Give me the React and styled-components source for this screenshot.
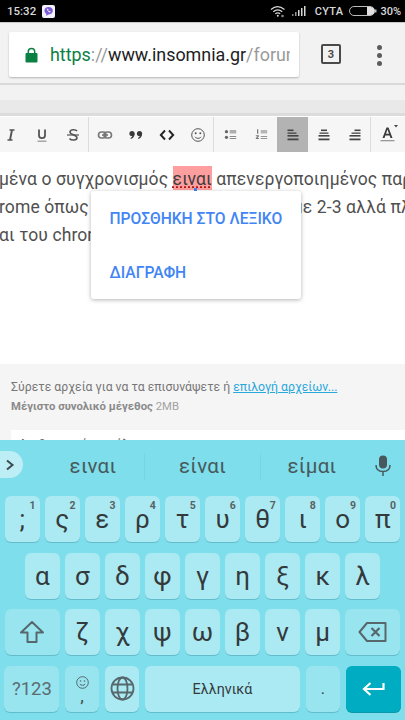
import React from "react";
import styled, { createGlobalStyle } from "styled-components";

const GlobalStyle = createGlobalStyle`
  html, body {
    margin: 0;
    padding: 0;
    background: #fff;
    font-family: Roboto, "Noto Sans", sans-serif;
  }
`;

const Page = styled.div`
  width: 405px;
  height: 720px;
  display: flex;
  flex-direction: column;
  overflow: hidden;
`;

const StatusBar = styled.div`
  height: 22px;
  flex: none;
  background: #000;
  border-bottom: 1px solid #c9c9c9;
  color: #d8d8d8;
  display: flex;
  align-items: center;
  padding: 0 4px 0 7px;
  font-size: 11px;
  font-weight: 500;
`;

const Time = styled.span`
  margin-right: 6px;
  font-size: 11.5px;
`;

const Carrier = styled.span`
  margin: 0 6px 0 9px;
  letter-spacing: 0.3px;
`;

const Spacer = styled.div`
  flex: 1;
`;

const Gap = styled.span`
  width: ${(p) => p.$w}px;
`;

const ChromeBar = styled.div`
  height: 62px;
  flex: none;
  box-sizing: border-box;
  background: #f2f2f2;
  border-bottom: 2px solid #d9d9d9;
  display: flex;
  align-items: flex-start;
  padding: 9px 0 0 9px;
`;

const UrlBox = styled.div`
  width: 290px;
  height: 45px;
  flex: none;
  box-sizing: border-box;
  background: #fff;
  border-radius: 2px;
  box-shadow: 0 1px 2px rgba(0, 0, 0, 0.25);
  display: flex;
  align-items: center;
  padding: 0 9px 0 16px;
`;

const UrlText = styled.div`
  margin-left: 12px;
  font-size: 17.9px;
  white-space: nowrap;
  overflow: hidden;
  color: #212121;
`;

const UrlPart = styled.span`
  color: ${(p) => p.$color};
`;

const TabCount = styled.div`
  width: 20px;
  height: 20px;
  flex: none;
  box-sizing: border-box;
  margin: 12px 0 0 22px;
  border: 2px solid #4a4a4a;
  border-radius: 2px;
  display: flex;
  align-items: center;
  justify-content: center;
  font-size: 11px;
  font-weight: 700;
  color: #4a4a4a;
`;

const MenuDots = styled.div`
  display: flex;
  flex-direction: column;
  gap: 3px;
  margin: 13px 0 0 36px;
`;

const Dot = styled.span`
  width: 5px;
  height: 5px;
  border-radius: 50%;
  background: #5c5c5c;
`;

const BandLight = styled.div`
  height: 15px;
  flex: none;
  background: #f2f2f2;
`;

const BandDark = styled.div`
  height: 13px;
  flex: none;
  background: #e9e9e9;
  border-bottom: 3px solid #dcdcdc;
  margin-bottom: 1px;
`;

const Toolbar = styled.div`
  height: 35px;
  flex: none;
  background: #f6f6f6;
  display: flex;
  margin-left: -5px;
  width: 410px;
`;

const ToolGroup = styled.div`
  display: flex;
  flex: none;
  border-right: ${(p) => (p.$last ? "none" : "1px solid #dcdcdc")};
  padding-left: ${(p) => p.$pad || 0}px;
`;

const Tool = styled.div`
  width: 31px;
  height: 35px;
  display: flex;
  align-items: center;
  justify-content: center;
  background: ${(p) => (p.$active ? "#b3b3b3" : "transparent")};
  color: #333;
`;

const Editor = styled.div`
  height: 212px;
  flex: none;
  position: relative;
  padding-top: 13px;
  box-sizing: border-box;
  background: #fff;
  overflow: hidden;
`;

const TextLine = styled.div`
  height: 28px;
  line-height: 28px;
  font-size: 17.5px;
  letter-spacing: 0.1px;
  color: #4f4f4f;
  white-space: nowrap;
  margin-left: -1px;
`;

const Misspelled = styled.span`
  background: #ff9e9e;
  color: #3d3d3d;
  padding: 3px 0 1px;
  text-decoration: underline dotted #b01818;
  text-underline-offset: 2px;
`;

const Hidden = styled.span`
  display: inline-block;
  width: ${(p) => p.$w}px;
`;

const Caret = styled.span`
  position: absolute;
  left: 194px;
  top: 36px;
  width: 3px;
  height: 3px;
  background: #4285f4;
`;

const Popup = styled.div`
  position: absolute;
  left: 91px;
  top: 39px;
  width: 210px;
  height: 108px;
  background: #fff;
  border-radius: 3px;
  box-shadow: 0 1px 4px rgba(0, 0, 0, 0.3);
  display: flex;
  flex-direction: column;
`;

const PopupItem = styled.div`
  height: 54px;
  display: flex;
  align-items: center;
  padding-left: 18.5px;
  font-size: 15.65px;
  font-weight: 500;
  color: #4285f4;
  white-space: nowrap;
`;

const Attach = styled.div`
  flex: 1;
  min-height: 0;
  background: #f5f5f5;
  overflow: hidden;
  padding: 16px 0 0 11px;
  font-size: 12.28px;
  color: #777;
`;

const AttachLine = styled.div`
  height: 18px;
  line-height: 14px;
  white-space: nowrap;
`;

const AttachLink = styled.span`
  color: #29a8dc;
  text-decoration: underline;
`;

const AttachNote = styled.div`
  height: 18px;
  line-height: 18px;
  font-size: 11.3px;
  white-space: nowrap;
  color: #a2a2a2;
`;

const AttachStrong = styled.b`
  color: #8a8a8a;
  font-weight: 700;
`;

const RevisionBox = styled.div`
  margin-top: 14px;
  height: 40px;
  background: #fff;
  padding: 6px 0 0 8px;
  font-size: 11.6px;
  font-weight: 500;
  color: #666;
`;

const Keyboard = styled.div`
  height: 280px;
  flex: none;
  background: #7fdeeb;
  display: flex;
  flex-direction: column;
`;

const Suggestions = styled.div`
  height: 50px;
  flex: none;
  position: relative;
  display: flex;
  align-items: center;
  padding-left: 42px;
  padding-top: 2px;
  box-sizing: border-box;
`;

const Chevron = styled.div`
  position: absolute;
  left: 0;
  top: 11px;
  width: 23px;
  height: 27px;
  background: #bdeef5;
  border-radius: 0 14px 14px 0;
  display: flex;
  align-items: center;
  padding-left: 5px;
  box-sizing: border-box;
`;

const Suggestion = styled.div`
  width: ${(p) => p.$w}px;
  height: 27px;
  flex: none;
  display: flex;
  align-items: center;
  justify-content: center;
  font-size: 20.5px;
  letter-spacing: 0.3px;
  color: #47595c;
  border-right: ${(p) => (p.$divider ? "1px solid #77d5e2" : "none")};
`;

const Mic = styled.div`
  margin-left: 11px;
  display: flex;
`;

const Rows = styled.div`
  display: flex;
  flex-direction: column;
  gap: 10.5px;
  padding-top: 6px;
`;

const KeyRow = styled.div`
  display: flex;
  justify-content: center;
  gap: 5.55px;
  height: 46px;
`;

const Key = styled.div`
  width: ${(p) => p.$w || 34.5}px;
  height: 46px;
  flex: none;
  position: relative;
  box-sizing: border-box;
  border-radius: 6px;
  background: ${(p) => (p.$enter ? "#00acc1" : p.$dim ? "#98e5f0" : "#abeaf3")};
  box-shadow: 0 1px 0 ${(p) => (p.$enter ? "#0a98aa" : "#62bccb")};
  display: flex;
  align-items: center;
  justify-content: center;
  font-size: ${(p) => p.$size || 26}px;
  color: ${(p) => p.$color || "#343a3c"};
`;

const Hint = styled.span`
  position: absolute;
  top: 3px;
  right: 4px;
  font-size: 10.5px;
  font-weight: 700;
  color: #566264;
`;

const CommaStack = styled.div`
  display: flex;
  flex-direction: column;
  align-items: center;
  gap: 3px;
  font-size: 15px;
  font-weight: 700;
  line-height: 10px;
  color: #4a5557;
`;

const Viber = () => (
  <svg width="13" height="13" viewBox="0 0 13 13">
    <rect width="13" height="13" rx="2" fill="#f3f1fb" />
    <path d="M6.5 2C4 2 2.5 3.2 2.5 5.6c0 1.7.7 2.7 1.8 3.2V11l1.9-1.6h.6c2.6 0 4-1.4 4-3.8S9 2 6.5 2z" fill="#7b5cd6" />
    <path d="M5 4.2c.5 1.6 1.4 2.6 3 3.2l.6-.8-1-.7-.5.3c-.5-.3-.8-.7-1-1.2l.4-.4-.7-1z" fill="#fff" />
  </svg>
);

const Wifi = () => (
  <svg width="16" height="13" viewBox="0 0 16 13" fill="none" stroke="#d8d8d8" strokeWidth="1.2">
    <path d="M1 4.5C5 1 10 1 14.5 4.5" />
    <path d="M3.2 6.7C6 4.4 9.5 4.4 12.3 6.7" />
    <path d="M5.3 8.8C6.8 7.6 8.7 7.6 10.2 8.8" />
    <circle cx="7.8" cy="10.8" r="1" fill="#d8d8d8" stroke="none" />
    <circle cx="12.5" cy="11" r="1.3" fill="#888" stroke="none" />
  </svg>
);

const Signal = () => (
  <svg width="14" height="10" viewBox="0 0 14 10" fill="#d8d8d8">
    <rect x="0" y="8" width="1.5" height="2" opacity="0.6" />
    <rect x="3" y="6" width="1.5" height="4" opacity="0.7" />
    <rect x="6" y="4" width="1.5" height="6" />
    <rect x="9" y="2" width="1.5" height="8" />
    <rect x="12" y="0" width="1.5" height="10" />
  </svg>
);

const Battery = () => (
  <svg width="28" height="10" viewBox="0 0 28 10">
    <rect x="0.5" y="0.5" width="25" height="9" rx="4.5" fill="none" stroke="#bbb" />
    <path d="M18 1h3.5a4 4 0 0 1 0 8H18z" fill="#e0e0e0" />
    <rect x="26" y="3.5" width="1.5" height="3" fill="#bbb" />
  </svg>
);

const Lock = () => (
  <svg width="13" height="16" viewBox="0 0 13 16" style={{ flex: "none" }}>
    <path d="M3.3 7V4.6a3.2 3.2 0 0 1 6.4 0V7" fill="none" stroke="#0b8043" strokeWidth="1.5" />
    <rect x="0.5" y="6" width="12" height="9.5" rx="1" fill="#0b8043" />
  </svg>
);

const ico = { width: 16, height: 16, viewBox: "0 0 16 16" };
const smallIco = { width: 13, height: 13, viewBox: "0 0 16 16" };

const ItalicIcon = () => (
  <svg {...ico} fill="none" stroke="#555" strokeWidth="1.3">
    <path d="M9 3 7 13" strokeWidth="1.9" />
    <path d="M6.500 3h5M4.500 13h5" />
  </svg>
);
const UnderlineIcon = () => (
  <svg {...ico} fill="none" stroke="#555">
    <path d="M5 2.500v6c0 3.600 6 3.600 6 0v-6" strokeWidth="1.800" />
    <path d="M3.500 14.200h9" stroke="#999" strokeWidth="1.300" />
  </svg>
);
const StrikeIcon = () => (
  <svg {...ico} fill="none" stroke="#555" strokeWidth="1.600">
    <path d="M12 4c-1-1.500-6.500-2-7 .8C4.400 8 12 7.500 12 10.800c0 3-6 2.800-7.500.7" />
    <path d="M2 8h12" strokeWidth="1.200" />
  </svg>
);
const LinkIcon = () => (
  <svg {...ico} fill="none" stroke="#777" strokeWidth="1.600">
    <rect x="1.500" y="5" width="7.500" height="6" rx="3" />
    <rect x="7" y="5" width="7.500" height="6" rx="3" />
    <path d="M5 8h6" />
  </svg>
);
const QuoteIcon = () => (
  <svg {...ico} fill="#3a3a3a">
    <circle cx="4" cy="6.500" r="2.600" />
    <path d="M6.600 6.500c0 3-1.500 5-3.800 5.500l-.3-1c1.500-.7 2-2 2-3.500z" />
    <circle cx="11.500" cy="6.500" r="2.600" />
    <path d="M14.100 6.500c0 3-1.500 5-3.800 5.500l-.3-1c1.500-.7 2-2 2-3.500z" />
  </svg>
);
const CodeIcon = () => (
  <svg {...ico} fill="none" stroke="#222" strokeWidth="1.900">
    <path d="M6 3.500 1.800 8 6 12.500M10 3.500 14.200 8 10 12.500" />
  </svg>
);
const SmileIcon = () => (
  <svg {...ico} fill="none" stroke="#555" strokeWidth="1">
    <circle cx="8" cy="8" r="6.300" />
    <circle cx="5.700" cy="6.300" r="1" fill="#555" stroke="none" />
    <circle cx="10.300" cy="6.300" r="1" fill="#555" stroke="none" />
    <path d="M4.800 9.800c1.500 2 5 2 6.400 0" />
  </svg>
);
const BulletIcon = () => (
  <svg {...smallIco} fill="#666">
    <circle cx="3" cy="4.500" r="2" />
    <circle cx="3" cy="11.500" r="2" />
    <path d="M7 3h8v1.200H7zM7 5.500h8v1H7zM7 10h8v1.200H7zM7 12.500h8v1H7z" />
  </svg>
);
const NumberIcon = () => (
  <svg {...smallIco} fill="#777">
    <path d="M2.500 1.500h1.500v5.500H2.500zM1 9h3.800v1.400l-2 1.800h2v1.300H1v-1.200l2.200-2H1z" />
    <path d="M7 3h8v1.200H7zM7 5.500h8v1H7zM7 10h8v1.200H7zM7 12.500h8v1H7z" />
  </svg>
);
const AlignIcon = ({ side }) => {
  const x = (w) => (side === "left" ? 2.5 : side === "center" ? 8 - w / 2 : 13.5 - w);
  return (
    <svg {...ico} fill="#444">
      <rect x={x(6)} y="2.500" width="6" height="1.600" />
      <rect x={x(9)} y="5.500" width="9" height="1.300" />
      <rect x={x(11)} y="8" width="11" height="1.600" />
      <rect x={x(11)} y="11.500" width="11" height="1.800" />
    </svg>
  );
};
const TextColorIcon = () => (
  <svg width="22" height="20" viewBox="-1.500 0 22 20">
    <path d="M5 13 9 2.500h2L15 13h-2l-.9-2.600H7.900L7 13zM8.500 8.800h3L10 4.500z" fill="#3a3a3a" />
    <rect x="3" y="15" width="14" height="1.300" fill="#999" />
    <path d="M16.500 0h4l-2 2.500z" fill="#444" />
  </svg>
);

const ChevronIcon = () => (
  <svg width="10" height="12" viewBox="0 0 10 12" fill="none" stroke="#3d4c50" strokeWidth="2">
    <path d="M2 1.500 7.500 6 2 10.500" />
  </svg>
);
const MicIcon = () => (
  <svg width="18" height="22" viewBox="0 0 18 22">
    <rect x="5" y="0.500" width="8" height="13" rx="4" fill="#47595c" />
    <path d="M2 10c0 4.500 3 6.500 7 6.500s7-2 7-6.500M9 16.500V21" fill="none" stroke="#47595c" strokeWidth="1.500" />
  </svg>
);
const ShiftIcon = () => (
  <svg width="26" height="24" viewBox="0 0 26 24" fill="none" stroke="#56686c" strokeWidth="2">
    <path d="M13 2 2 12.500h6.500V22h9v-9.500H24z" strokeLinejoin="round" />
  </svg>
);
const BackspaceIcon = () => (
  <svg width="30" height="22" viewBox="0 0 30 22" fill="none" stroke="#56686c" strokeWidth="2">
    <path d="M9 2h18.500v18H9L1.500 11z" strokeLinejoin="round" />
    <path d="M13.500 7l8 8M21.500 7l-8 8" strokeWidth="2.200" />
  </svg>
);
const GlobeIcon = () => (
  <svg width="25" height="25" viewBox="0 0 25 25" fill="none" stroke="#56686c" strokeWidth="1.800">
    <circle cx="12.500" cy="12.500" r="11" />
    <ellipse cx="12.500" cy="12.500" rx="5" ry="11" />
    <path d="M2 8.500h21M2 16.500h21" />
  </svg>
);
const EmojiIcon = () => (
  <svg width="13" height="13" viewBox="0 0 13 13" fill="none" stroke="#56686c">
    <circle cx="6.500" cy="6.500" r="5.800" />
    <circle cx="4.500" cy="5" r="0.800" fill="#56686c" stroke="none" />
    <circle cx="8.500" cy="5" r="0.800" fill="#56686c" stroke="none" />
    <path d="M3.800 8c1.200 1.800 4.200 1.800 5.400 0" />
  </svg>
);
const EnterIcon = () => (
  <svg width="23" height="16" viewBox="0 0 23 16" fill="none" stroke="#fff" strokeWidth="2.200">
    <path d="M21.500 2v6H3" />
    <path d="M8.500 2 2 8l6.500 6" />
  </svg>
);

const topRow = [
  [";", "1"], ["ς", "2"], ["ε", "3"], ["ρ", "4"], ["τ", "5"],
  ["υ", "6"], ["θ", "7"], ["ι", "8"], ["ο", "9"], ["π", "0"],
];
const middleRow = ["α", "σ", "δ", "φ", "γ", "η", "ξ", "κ", "λ"];
const bottomRow = ["ζ", "χ", "ψ", "ω", "β", "ν", "μ"];

const App = () => {
  return (
    <Page>
      <GlobalStyle />
      <StatusBar>
        <Time>15:32</Time>
        <Viber />
        <Spacer />
        <Wifi />
        <Gap $w={6} />
        <Signal />
        <Carrier>CYTA</Carrier>
        <Battery />
        <Gap $w={3} />
        <span>30%</span>
      </StatusBar>

      <ChromeBar>
        <UrlBox>
          <Lock />
          <UrlText>
            <UrlPart $color="#0b8043">https</UrlPart>
            <UrlPart $color="#9a9a9a">://</UrlPart>
            www.insomnia.gr
            <UrlPart $color="#9a9a9a">/forum</UrlPart>
          </UrlText>
        </UrlBox>
        <TabCount>3</TabCount>
        <MenuDots>
          <Dot />
          <Dot />
          <Dot />
        </MenuDots>
      </ChromeBar>

      <BandLight />
      <BandDark />

      <Toolbar>
        <ToolGroup>
          <Tool><ItalicIcon /></Tool>
          <Tool><UnderlineIcon /></Tool>
          <Tool><StrikeIcon /></Tool>
        </ToolGroup>
        <ToolGroup>
          <Tool><LinkIcon /></Tool>
          <Tool><QuoteIcon /></Tool>
          <Tool><CodeIcon /></Tool>
          <Tool><SmileIcon /></Tool>
        </ToolGroup>
        <ToolGroup $pad={1}>
          <Tool><BulletIcon /></Tool>
          <Tool><NumberIcon /></Tool>
          <Tool $active><AlignIcon side="left" /></Tool>
          <Tool><AlignIcon side="center" /></Tool>
          <Tool><AlignIcon side="right" /></Tool>
        </ToolGroup>
        <ToolGroup $last>
          <Tool><TextColorIcon /></Tool>
        </ToolGroup>
      </Toolbar>

      <Editor>
        <TextLine>
          μένα ο συγχρονισμός <Misspelled>ειναι</Misspelled> απενεργοποιημένος παρ
        </TextLine>
        <TextLine>
          rome όπως ε<Hidden $w={190} />με 2-3 αλλά πλ
        </TextLine>
        <TextLine>αι του chrome</TextLine>
        <Caret />
        <Popup>
          <PopupItem>ΠΡΟΣΘΗΚΗ ΣΤΟ ΛΕΞΙΚΟ</PopupItem>
          <PopupItem>ΔΙΑΓΡΑΦΗ</PopupItem>
        </Popup>
      </Editor>

      <Attach>
        <AttachLine>
          Σύρετε αρχεία για να τα επισυνάψετε ή <AttachLink>επιλογή αρχείων...</AttachLink>
        </AttachLine>
        <AttachNote>
          <AttachStrong>Μέγιστο συνολικό μέγεθος</AttachStrong> 2MB
        </AttachNote>
        <RevisionBox>Αναθεωρημένα σχόλια</RevisionBox>
      </Attach>

      <Keyboard>
        <Suggestions>
          <Chevron><ChevronIcon /></Chevron>
          <Suggestion $w={102} $divider>ειναι</Suggestion>
          <Suggestion $w={115} $divider>είναι</Suggestion>
          <Suggestion $w={102}>είμαι</Suggestion>
          <Mic><MicIcon /></Mic>
        </Suggestions>
        <Rows>
          <KeyRow>
            {topRow.map(([letter, hint]) => (
              <Key key={letter}>
                {letter}
                <Hint>{hint}</Hint>
              </Key>
            ))}
          </KeyRow>
          <KeyRow>
            {middleRow.map((letter) => (
              <Key key={letter}>{letter}</Key>
            ))}
          </KeyRow>
          <KeyRow>
            <Key $w={55} $dim><ShiftIcon /></Key>
            {bottomRow.map((letter) => (
              <Key key={letter}>{letter}</Key>
            ))}
            <Key $w={55} $dim><BackspaceIcon /></Key>
          </KeyRow>
          <KeyRow>
            <Key $w={55} $dim $size={18.5} $color="#5b6c70">?123</Key>
            <Key $dim>
              <CommaStack>
                <EmojiIcon />
                ,
              </CommaStack>
            </Key>
            <Key><GlobeIcon /></Key>
            <Key $w={155} $size={14.3}>Ελληνικά</Key>
            <Key $dim $size={16}>.</Key>
            <Key $w={55} $enter><EnterIcon /></Key>
          </KeyRow>
        </Rows>
      </Keyboard>
    </Page>
  );
};

export default App;
